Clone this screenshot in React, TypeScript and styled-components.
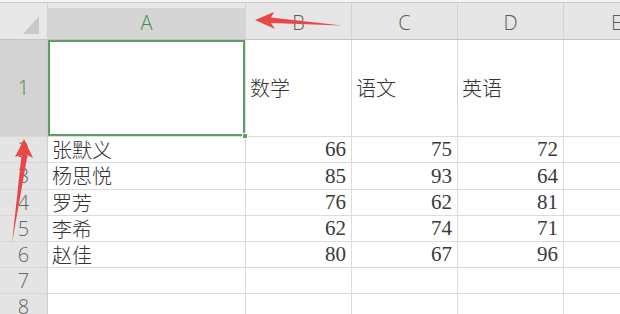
import styled, { createGlobalStyle } from "styled-components";

type Student = {
  name: string;
  math: number;
  chinese: number;
  english: number;
};

const students: Student[] = [
  { name: "张默义", math: 66, chinese: 75, english: 72 },
  { name: "杨思悦", math: 85, chinese: 93, english: 64 },
  { name: "罗芳", math: 76, chinese: 62, english: 81 },
  { name: "李希", math: 62, chinese: 74, english: 71 },
  { name: "赵佳", math: 80, chinese: 67, english: 96 },
];

const columns = ["A", "B", "C", "D", "E"];
const dataRowHeights = [26, 27, 26, 26, 26, 26, 26];

const GlobalStyle = createGlobalStyle`
  html, body {
    margin: 0;
    padding: 0;
    background: #ffffff;
    overflow: hidden;
  }
  body {
    font-family: "Liberation Sans", "Noto Sans CJK SC", sans-serif;
  }
`;

const Page = styled.div`
  position: relative;
  width: 620px;
  height: 314px;
  overflow: hidden;
  background: #fff;
`;

const TopStrip = styled.div`
  height: 2px;
  border-bottom: 1px solid #c9c9c9;
  background: #f4f4f4;
`;

const Sheet = styled.div`
  display: grid;
  grid-template-columns: 48px 198px 106px 106px 106px 106px;
  grid-template-rows: 37px 97px ${dataRowHeights.map((h) => `${h}px`).join(" ")};
`;

const Corner = styled.div`
  background: #e8e8e8;
  border-right: 1px solid #d2d2d2;
  border-bottom: 1px solid #c4c4c4;
  display: flex;
  align-items: flex-end;
  justify-content: flex-end;
  padding: 0 8px 5px 0;
`;

const CornerMark = styled.div`
  width: 0;
  height: 0;
  border-left: 16px solid transparent;
  border-bottom: 18px solid #c9c9c9;
`;

const ColHeader = styled.div<{ $active?: boolean }>`
  display: flex;
  align-items: center;
  justify-content: center;
  padding-top: 3px;
  line-height: 1;
  background: ${({ $active }) =>
    $active ? "linear-gradient(#e8e8e8 0 5px, #d5d5d5 5px)" : "#e6e6e6"};
  border-right: 1px solid #d4d4d4;
  border-bottom: 1px solid #c4c4c4;
  color: ${({ $active }) => ($active ? "#3f8c4f" : "#5c5c5c")};
  font-family: "Open Sans", "Liberation Sans", sans-serif;
  font-size: 20px;
  font-weight: 300;
`;

const RowHeader = styled.div<{ $active?: boolean }>`
  display: flex;
  align-items: center;
  justify-content: center;
  line-height: 1;
  background: ${({ $active }) => ($active ? "#d3d3d3" : "#e4e4e4")};
  border-right: 1px solid #cfcfcf;
  border-bottom: 1px solid #d8d8d8;
  color: ${({ $active }) => ($active ? "#3f8c4f" : "#666666")};
  font-family: "Open Sans", "Liberation Sans", sans-serif;
  font-size: 20px;
  font-weight: 300;
`;

const Cell = styled.div<{ $align?: "left" | "right"; $selected?: boolean }>`
  position: relative;
  display: flex;
  align-items: center;
  justify-content: ${({ $align }) => ($align === "right" ? "flex-end" : "flex-start")};
  padding: ${({ $align }) => ($align === "right" ? "0 5px 0 0" : "0 0 0 4px")};
  border-right: 1px solid #dcdcdc;
  border-bottom: 1px solid #dcdcdc;
  color: #333333;
  line-height: 1;
  white-space: nowrap;
  box-shadow: ${({ $selected }) => ($selected ? "inset 0 0 0 2px #5d9f62" : "none")};
`;

const Handle = styled.span`
  position: absolute;
  right: -3px;
  bottom: -3px;
  width: 4px;
  height: 4px;
  background: #5d9f62;
  border: 1px solid #fff;
  z-index: 2;
`;

const Label = styled.span`
  font-family: "Noto Sans CJK SC", sans-serif;
  font-weight: 300;
  font-size: 20px;
  line-height: 1;
`;

const Num = styled.span`
  font-family: "Liberation Serif", serif;
  font-size: 21px;
  line-height: 1;
  color: #3a3a3a;
`;

const Annotations = styled.svg`
  position: absolute;
  inset: 0;
  pointer-events: none;
`;

export default function App() {
  return (
    <Page>
      <GlobalStyle />
      <TopStrip />
      <Sheet>
        <Corner>
          <CornerMark />
        </Corner>
        {columns.map((c) => (
          <ColHeader key={c} $active={c === "A"}>
            {c}
          </ColHeader>
        ))}

        <RowHeader $active>1</RowHeader>
        <Cell $selected>
          <Handle />
        </Cell>
        <Cell>
          <Label>数学</Label>
        </Cell>
        <Cell>
          <Label>语文</Label>
        </Cell>
        <Cell>
          <Label>英语</Label>
        </Cell>
        <Cell />

        {dataRowHeights.map((_, i) => {
          const s = students[i];
          return [
            <RowHeader key={`h${i}`}>{i + 2}</RowHeader>,
            <Cell key={`a${i}`}>{s && <Label>{s.name}</Label>}</Cell>,
            <Cell key={`b${i}`} $align="right">{s && <Num>{s.math}</Num>}</Cell>,
            <Cell key={`c${i}`} $align="right">{s && <Num>{s.chinese}</Num>}</Cell>,
            <Cell key={`d${i}`} $align="right">{s && <Num>{s.english}</Num>}</Cell>,
            <Cell key={`e${i}`} />,
          ];
        })}
      </Sheet>

      <Annotations width="620" height="314" viewBox="0 0 620 314">
        <polygon
          points="255,20 274,12 271,17.5 342,25.5 271,23 275,29"
          fill="#e8474a"
        />
        <polygon
          points="24,139 33,158 27.5,155 12,243 21.5,155 15,157"
          fill="#e8474a"
        />
      </Annotations>
    </Page>
  );
}
